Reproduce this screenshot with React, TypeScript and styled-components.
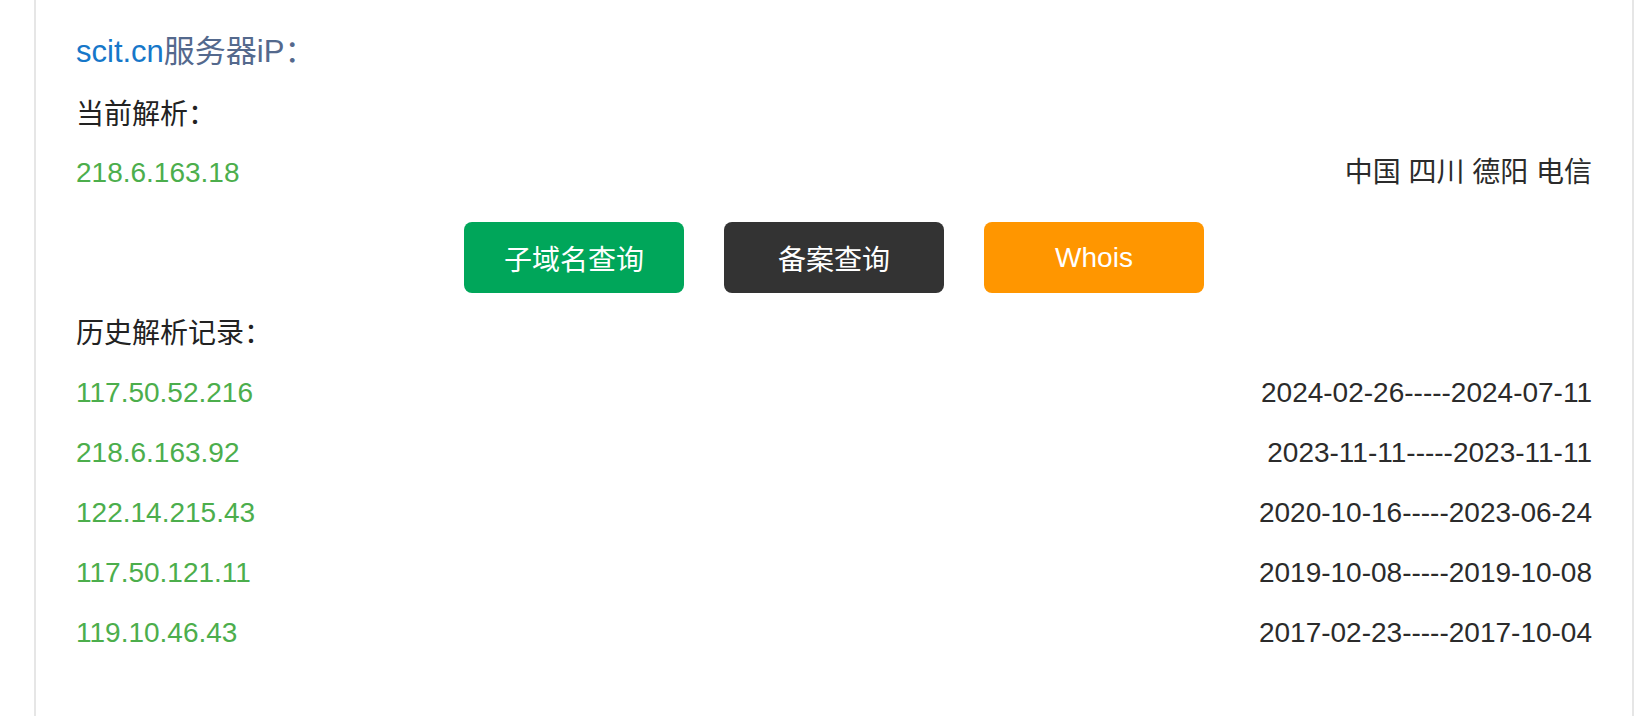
import React from "react";
import styled, { createGlobalStyle } from "styled-components";

const history = [
  { ip: "117.50.52.216", range: "2024-02-26-----2024-07-11" },
  { ip: "218.6.163.92", range: "2023-11-11-----2023-11-11" },
  { ip: "122.14.215.43", range: "2020-10-16-----2023-06-24" },
  { ip: "117.50.121.11", range: "2019-10-08-----2019-10-08" },
  { ip: "119.10.46.43", range: "2017-02-23-----2017-10-04" },
];

const App = () => {
  return (
    <>
      <GlobalStyle />
      <Panel>
        <Title>
          <Domain>scit.cn</Domain>服务器iP：
        </Title>
        <Label>当前解析：</Label>
        <Row>
          <Ip>218.6.163.18</Ip>
          <Info>中国 四川 德阳 电信</Info>
        </Row>
        <ButtonBar>
          <Button color="#00a65a">子域名查询</Button>
          <Button color="#333333">备案查询</Button>
          <Button color="#ff9600">Whois</Button>
        </ButtonBar>
        <HistoryLabel>历史解析记录：</HistoryLabel>
        {history.map((item) => (
          <HistoryRow key={item.ip}>
            <Ip>{item.ip}</Ip>
            <Info>{item.range}</Info>
          </HistoryRow>
        ))}
      </Panel>
    </>
  );
};

export default App;

const GlobalStyle = createGlobalStyle`
  body {
    margin: 0;
    background: #fff;
    font-family: "Liberation Sans", "Noto Sans CJK SC", sans-serif;
  }
`;

const Panel = styled.div`
  box-sizing: border-box;
  margin-left: 34px;
  width: 1600px;
  min-height: 100vh;
  border-left: 2px solid #e6e6e6;
  border-right: 2px solid #e6e6e6;
  padding: 27px 40px 0 40px;
  font-size: 28px;
  color: #2b2b2b;
`;

const Title = styled.div`
  font-size: 31px;
  line-height: 50px;
  color: #54698d;
`;

const Domain = styled.span`
  color: #1677c9;
`;

const Label = styled.div`
  margin-top: 9px;
  line-height: 58px;
  color: #222;
`;

const HistoryLabel = styled(Label)`
  margin-top: 12px;
`;

const Row = styled.div`
  display: flex;
  justify-content: space-between;
  line-height: 58px;
`;

const HistoryRow = styled(Row)`
  line-height: 60px;
`;

const Ip = styled.span`
  color: #4cae4c;
`;

const Info = styled.span`
  color: #2b2b2b;
`;

const ButtonBar = styled.div`
  display: flex;
  justify-content: center;
  gap: 40px;
  margin-top: 20px;
`;

const Button = styled.div<{ color: string }>`
  width: 220px;
  height: 71px;
  border-radius: 8px;
  background: ${(props) => props.color};
  color: #fff;
  font-size: 28px;
  display: flex;
  align-items: center;
  justify-content: center;
`;
